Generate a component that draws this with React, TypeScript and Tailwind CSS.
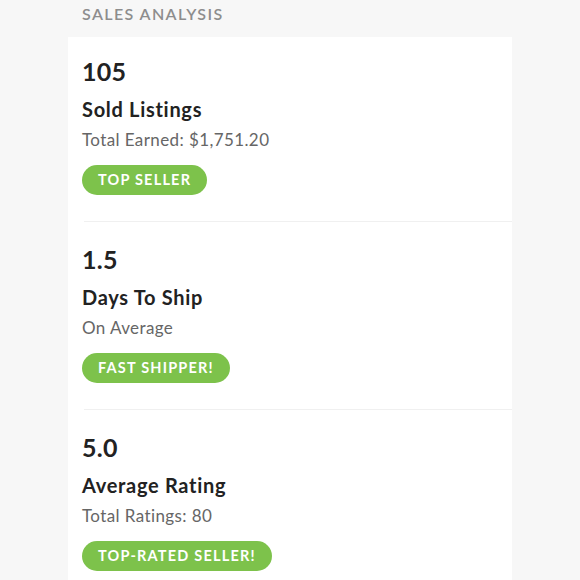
import React from "react";

const stats = [
  { value: "105", title: "Sold Listings", sub: "Total Earned: $1,751.20", badge: "Top Seller" },
  { value: "1.5", title: "Days To Ship", sub: "On Average", badge: "Fast Shipper!" },
  { value: "5.0", title: "Average Rating", sub: "Total Ratings: 80", badge: "Top-Rated Seller!" },
];

export default function App() {
  return (
    <div
      className="h-[580px] w-[580px] overflow-hidden bg-[#f7f7f7] pl-[68px]"
      style={{ fontFamily: "Lato, 'Open Sans', sans-serif" }}
    >
      <div className="h-[37px] px-[14px] pt-[4px] text-[16px] font-semibold uppercase leading-[20px] tracking-[1.4px] text-[#8d8d8d]">
        Sales Analysis
      </div>
      <div className="w-[444px] bg-white">
        {stats.map((s, i) => (
          <div key={s.value}>
            {i > 0 && <div className="ml-[16px] border-t border-[#f0f0f0]" />}
            <div className={`px-[14px] pb-[26px] ${i === 0 ? "pt-[20px]" : "pt-[23px]"}`}>
              <div className="text-[25px] font-bold leading-[28px] tracking-[0.3px] text-[#222222]">{s.value}</div>
              <div className="mt-[12px] text-[20px] font-bold leading-[24px] tracking-[0.7px] text-[#222222]">{s.title}</div>
              <div className="mt-[8px] text-[17px] leading-[22px] tracking-[0.4px] text-[#666666]">{s.sub}</div>
              <div className="mt-[14px] inline-flex h-[30px] items-center rounded-full bg-[#7dc24b] px-[16px] text-[14.5px] font-bold uppercase tracking-[1.2px] text-white">
                {s.badge}
              </div>
            </div>
          </div>
        ))}
      </div>
    </div>
  );
}
